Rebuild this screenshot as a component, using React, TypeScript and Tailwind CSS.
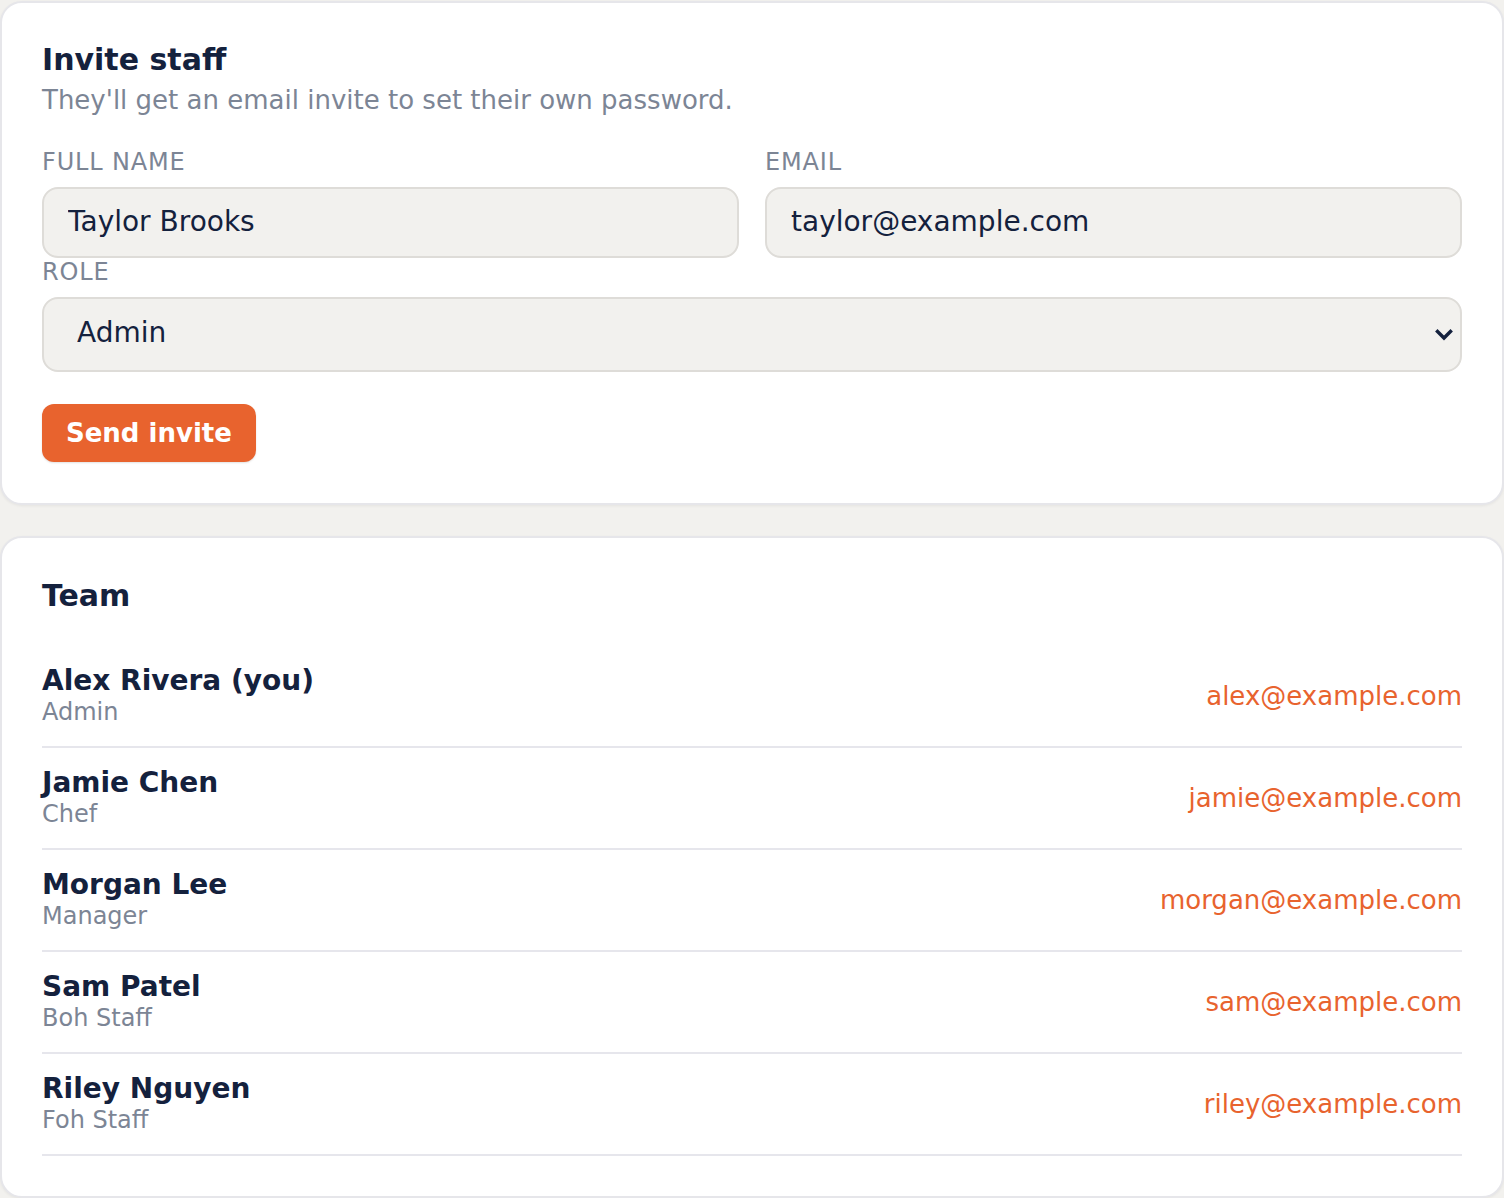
import React from "react";

const team = [
  { name: "Alex Rivera (you)", role: "Admin", email: "alex@example.com" },
  { name: "Jamie Chen", role: "Chef", email: "jamie@example.com" },
  { name: "Morgan Lee", role: "Manager", email: "morgan@example.com" },
  { name: "Sam Patel", role: "Boh Staff", email: "sam@example.com" },
  { name: "Riley Nguyen", role: "Foh Staff", email: "riley@example.com" },
];

export default function App() {
  return (
    <div
      className="min-h-[1198px] w-full bg-[#f2f1ee] pt-px pb-px"
      style={{ fontFamily: '"DejaVu Sans", Verdana, sans-serif' }}
    >
      <div className="rounded-[22px] border-2 border-[#e6e6ea] bg-white px-[40px] pt-[39px] pb-[41px] shadow-[0_1px_3px_rgba(0,0,0,0.06)]">
        <h1 className="text-[30px] leading-[36px] font-bold text-[#14213d]">Invite staff</h1>
        <p className="mt-[5px] text-[26px] leading-[34px] text-[#7c8595]">
          They'll get an email invite to set their own password.
        </p>
        <div className="mt-[31px] grid grid-cols-2 gap-x-[26px]">
          <label className="flex flex-col">
            <span className="text-[24px] leading-[28px] tracking-[0.035em] text-[#7c8595]">FULL NAME</span>
            <input
              defaultValue="Taylor Brooks"
              className="mt-[11px] h-[71px] w-full rounded-[16px] border-2 border-[#dedcd8] bg-[#f2f1ee] px-[24px] pb-[3px] text-[28px] text-[#14213d] outline-none"
            />
          </label>
          <label className="flex flex-col">
            <span className="text-[24px] leading-[28px] tracking-[0.035em] text-[#7c8595]">EMAIL</span>
            <input
              defaultValue="taylor@example.com"
              className="mt-[11px] h-[71px] w-full rounded-[16px] border-2 border-[#dedcd8] bg-[#f2f1ee] px-[24px] pb-[3px] text-[28px] text-[#14213d] outline-none"
            />
          </label>
        </div>
        <label className="flex flex-col">
          <span className="text-[24px] leading-[28px] tracking-[0.035em] text-[#7c8595]">ROLE</span>
          <div className="relative mt-[11px]">
            <select
              defaultValue="Admin"
              className="h-[75px] w-full appearance-none rounded-[16px] border-2 border-[#dedcd8] bg-[#f2f1ee] pl-[33px] pr-[60px] pb-[4px] text-[28px] text-[#14213d] outline-none"
            >
              <option>Admin</option>
              <option>Manager</option>
              <option>Chef</option>
              <option>Boh Staff</option>
              <option>Foh Staff</option>
            </select>
            <svg
              className="pointer-events-none absolute right-[8px] top-1/2 -translate-y-1/2"
              width="20"
              height="20"
              viewBox="0 0 20 20"
            >
              <path d="M3.5 6.5 L10 13 L16.5 6.5" fill="none" stroke="#14213d" strokeWidth="3.4" strokeLinecap="square" />
            </svg>
          </div>
        </label>
        <button className="mt-[32px] h-[58px] rounded-[12px] bg-[#e8632e] px-[24px] text-[26px] font-bold text-white shadow-[0_1px_2px_rgba(0,0,0,0.12)]">
          Send invite
        </button>
      </div>

      <div className="mt-[31px] rounded-[22px] border-2 border-[#e6e6ea] bg-white px-[40px] pt-[40px] pb-[40px] shadow-[0_1px_3px_rgba(0,0,0,0.06)]">
        <h2 className="text-[30px] leading-[36px] font-bold text-[#14213d]">Team</h2>
        <ul className="mt-[32px]">
          {team.map((m) => (
            <li
              key={m.email}
              className="flex items-center justify-between border-b-2 border-[#e6e6ec] pt-[19px] pb-[19px]"
            >
              <div className="flex flex-col">
                <span className="text-[28px] leading-[32px] font-bold text-[#14213d]">{m.name}</span>
                <span className="text-[24px] leading-[30px] text-[#7c8595]">{m.role}</span>
              </div>
              <span className="text-[26px] leading-[32px] text-[#e8632e]">{m.email}</span>
            </li>
          ))}
        </ul>
      </div>
    </div>
  );
}
